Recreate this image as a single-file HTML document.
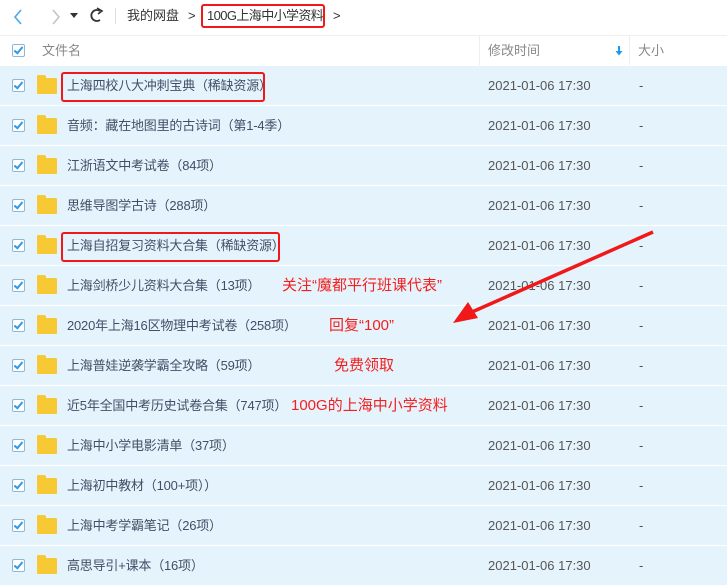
<!DOCTYPE html><html><head><meta charset="utf-8"><style>
body{margin:0;width:727px;height:582px;overflow:hidden;background:#fff;font-family:"Liberation Sans","Noto Sans CJK SC",sans-serif;font-size:13px;line-height:16px;color:#424e67;position:relative}
.a{position:absolute}
.row{position:absolute;left:0;width:727px;height:39px;background:#e5f4fc;border-top:1px solid #fff}
.cb{position:absolute;left:12px;top:13px;width:11px;height:11px;border:1px solid #8fb7d6;background:#fff;border-radius:2px}
.cb:after{content:"";position:absolute;left:3px;top:0px;width:3px;height:7px;border:solid #2e9ae8;border-width:0 2px 2px 0;transform:rotate(40deg)}
.fd{position:absolute;left:37px;top:12px;width:20px;height:16px;background:#f7c935;border-radius:1px}
.fd:before{content:"";position:absolute;left:0;top:-3px;width:9px;height:4px;background:#f7c935;border-radius:1px 2px 0 0}
.nm{position:absolute;left:67px;top:12px;letter-spacing:-0.2px}
.dt{position:absolute;left:488px;top:12px;color:#555}
.ds{position:absolute;left:639px;top:12px;color:#555}
.red{position:absolute;color:#f31e1e;font-size:15px;line-height:18px}
.box{position:absolute;border:2px solid #f01818;border-radius:3px}
</style></head><body>
<svg class="a" style="left:12px;top:8px" width="60" height="18"><path d="M9 2 L3 9 L9 16" stroke="#4aa8ee" stroke-width="1.6" fill="none"/><path d="M41 2 L47 9 L41 16" stroke="#c4c4c4" stroke-width="1.6" fill="none"/></svg>
<svg class="a" style="left:0;top:0" width="110" height="30"><path d="M70 13 L78 13 L74 18 Z" fill="#333"/><path d="M100 11 A5.5 5.5 0 1 0 100 20" stroke="#333" stroke-width="1.8" fill="none"/><path d="M97 8 L102 11 L98 14" stroke="#333" stroke-width="1.6" fill="none"/></svg>
<div class="a" style="left:115px;top:8px;width:1px;height:16px;background:#ddd"></div>
<div class="a" style="left:127px;top:8px;color:#333">我的网盘</div>
<div class="a" style="left:188px;top:8px;color:#333">&gt;</div>
<div class="a" style="left:207px;top:8px;color:#333;letter-spacing:-0.6px">100G上海中小学资料</div>
<div class="box" style="left:201px;top:4px;width:120px;height:20px"></div>
<div class="a" style="left:333px;top:8px;color:#333">&gt;</div>
<div class="a" style="left:0;top:35px;width:727px;height:1px;background:#eee"></div>
<div class="a" style="left:0;top:36px;width:727px;height:30px">
<div class="cb" style="top:8px"></div>
<div class="a" style="left:42px;top:7px;color:#888">文件名</div>
<div class="a" style="left:479px;top:0;width:1px;height:30px;background:#eee"></div>
<div class="a" style="left:488px;top:7px;color:#888">修改时间</div>
<svg class="a" style="left:614px;top:9px" width="10" height="12"><path d="M5 1 V9" stroke="#1a9af0" stroke-width="2"/><path d="M1.5 6 L5 10.5 L8.5 6 Z" fill="#1a9af0"/></svg>
<div class="a" style="left:629px;top:0;width:1px;height:30px;background:#eee"></div>
<div class="a" style="left:638px;top:7px;color:#888">大小</div>
</div>
<div class="row" style="top:65px"><div class="cb"></div><div class="fd"></div><div class="nm">上海四校八大冲刺宝典（稀缺资源）</div><div class="dt">2021-01-06 17:30</div><div class="ds">-</div></div>
<div class="row" style="top:105px"><div class="cb"></div><div class="fd"></div><div class="nm">音频：藏在地图里的古诗词（第1-4季）</div><div class="dt">2021-01-06 17:30</div><div class="ds">-</div></div>
<div class="row" style="top:145px"><div class="cb"></div><div class="fd"></div><div class="nm">江浙语文中考试卷（84项）</div><div class="dt">2021-01-06 17:30</div><div class="ds">-</div></div>
<div class="row" style="top:185px"><div class="cb"></div><div class="fd"></div><div class="nm">思维导图学古诗（288项）</div><div class="dt">2021-01-06 17:30</div><div class="ds">-</div></div>
<div class="row" style="top:225px"><div class="cb"></div><div class="fd"></div><div class="nm">上海自招复习资料大合集（稀缺资源）</div><div class="dt">2021-01-06 17:30</div><div class="ds">-</div></div>
<div class="row" style="top:265px"><div class="cb"></div><div class="fd"></div><div class="nm">上海剑桥少儿资料大合集（13项）</div><div class="dt">2021-01-06 17:30</div><div class="ds">-</div></div>
<div class="row" style="top:305px"><div class="cb"></div><div class="fd"></div><div class="nm">2020年上海16区物理中考试卷（258项）</div><div class="dt">2021-01-06 17:30</div><div class="ds">-</div></div>
<div class="row" style="top:345px"><div class="cb"></div><div class="fd"></div><div class="nm">上海普娃逆袭学霸全攻略（59项）</div><div class="dt">2021-01-06 17:30</div><div class="ds">-</div></div>
<div class="row" style="top:385px"><div class="cb"></div><div class="fd"></div><div class="nm">近5年全国中考历史试卷合集（747项）</div><div class="dt">2021-01-06 17:30</div><div class="ds">-</div></div>
<div class="row" style="top:425px"><div class="cb"></div><div class="fd"></div><div class="nm">上海中小学电影清单（37项）</div><div class="dt">2021-01-06 17:30</div><div class="ds">-</div></div>
<div class="row" style="top:465px"><div class="cb"></div><div class="fd"></div><div class="nm">上海初中教材（100+项））</div><div class="dt">2021-01-06 17:30</div><div class="ds">-</div></div>
<div class="row" style="top:505px"><div class="cb"></div><div class="fd"></div><div class="nm">上海中考学霸笔记（26项）</div><div class="dt">2021-01-06 17:30</div><div class="ds">-</div></div>
<div class="row" style="top:545px"><div class="cb"></div><div class="fd"></div><div class="nm">高思导引+课本（16项）</div><div class="dt">2021-01-06 17:30</div><div class="ds">-</div></div>
<div class="box" style="left:61px;top:72px;width:200px;height:26px"></div>
<div class="box" style="left:61px;top:232px;width:215px;height:26px"></div>
<div class="red" style="left:282px;top:277px">关注“魔都平行班课代表”</div>
<div class="red" style="left:329px;top:317px">回复“100”</div>
<div class="red" style="left:334px;top:357px">免费领取</div>
<div class="red" style="left:291px;top:397px">100G的上海中小学资料</div>
<svg class="a" style="left:0;top:0" width="727" height="582"><path d="M653 232 L472 312" stroke="#f01818" stroke-width="3.5"/><path d="M453 323 L468 302 L478 318 Z" fill="#f01818"/></svg>
</body></html>
